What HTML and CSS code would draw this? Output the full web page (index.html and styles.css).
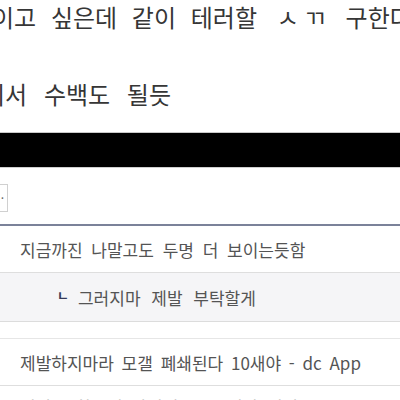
FILE: index.html
```html
<!DOCTYPE html>
<html lang="ko">
<head>
<meta charset="utf-8">
<link rel="stylesheet" href="styles.css">
</head>
<body>
<div class="page">
  <div class="post">
    <p class="post-line first"><span class="cut-a">이고</span> 싶은데 같이 테러할 <span class="jamo">ㅅㄲ</span> 구한다</p>
    <p class="post-line second"><span class="cut-b">기서</span> 수백도 될듯</p>
  </div>
  <div class="redact"></div>
  <div class="form-area">
    <span class="mini-btn">·</span>
  </div>
  <ul class="comments">
    <li class="comment"><span class="txt">지금까진 나말고도 두명 더 보이는듯함</span></li>
    <li class="comment reply"><span class="mark">ㄴ</span><span class="txt">그러지마 제발 부탁할게</span></li>
    <li class="spacer"></li>
    <li class="comment wide"><span class="txt">제발하지마라 모갤 폐쇄된다 10새야 - dc App</span></li>
    <li class="comment next"><span class="txt">진짜로 하는거 아니지 ㅋㅋ 설마 진짜로</span></li>
  </ul>
</div>
</body>
</html>
```
FILE: styles.css
```css
html, body {
  margin: 0;
  padding: 0;
  background: #ffffff;
}
.page {
  width: 400px;
  height: 400px;
  overflow: hidden;
  font-family: "Noto Sans CJK KR", "Noto Sans", sans-serif;
}
.post {
  display: flex;
  flex-direction: column;
  gap: 43px;
}
.post-line {
  margin: 0;
  font-size: 24px;
  line-height: 34px;
  color: #363636;
  white-space: nowrap;
  word-spacing: 8px;
}
.second {
  word-spacing: 10px;
}
.cut-a {
  margin-left: -8px;
}
.cut-b {
  margin-left: -17px;
}
.jamo {
  padding-left: 5px;
  letter-spacing: 5px;
}
.redact {
  margin-top: 21px;
  height: 34px;
  background: #000;
  border-top: 1px solid #c9c9c9;
  border-bottom: 1px solid #cfcfcf;
}
.form-area {
  height: 56px;
  display: flex;
  align-items: flex-start;
  padding-top: 16px;
  box-sizing: border-box;
}
.mini-btn {
  display: block;
  width: 18px;
  height: 28px;
  margin-left: -10px;
  border: 1px solid #d0d0d0;
  box-sizing: border-box;
  font-size: 12px;
  line-height: 26px;
  text-align: right;
  padding-right: 3px;
  color: #666;
}
.comments {
  list-style: none;
  margin: 0;
  padding: 0;
  border-top: 2px solid #7b8299;
}
.comment {
  height: 46px;
  display: flex;
  align-items: center;
  padding-left: 20px;
  border-bottom: 1px solid #dedede;
  font-size: 17px;
  color: #545454;
  white-space: nowrap;
  word-spacing: 4px;
}
.wide {
  word-spacing: 3px;
}
.reply {
  height: 48px;
  background: #f5f5f7;
  padding-left: 57px;
  border-bottom: 1px solid #dcdcdc;
  word-spacing: 6px;
}
.mark {
  color: #363a58;
  font-size: 13px;
  font-weight: bold;
  margin-right: 9px;
  position: relative;
  top: -3px;
}
.spacer {
  height: 16px;
  border-bottom: 1px solid #e6e6e6;
}
.next {
  border-bottom: none;
  align-items: flex-start;
  padding-top: 8px;
  box-sizing: border-box;
  color: #a0a0a0;
}
```
